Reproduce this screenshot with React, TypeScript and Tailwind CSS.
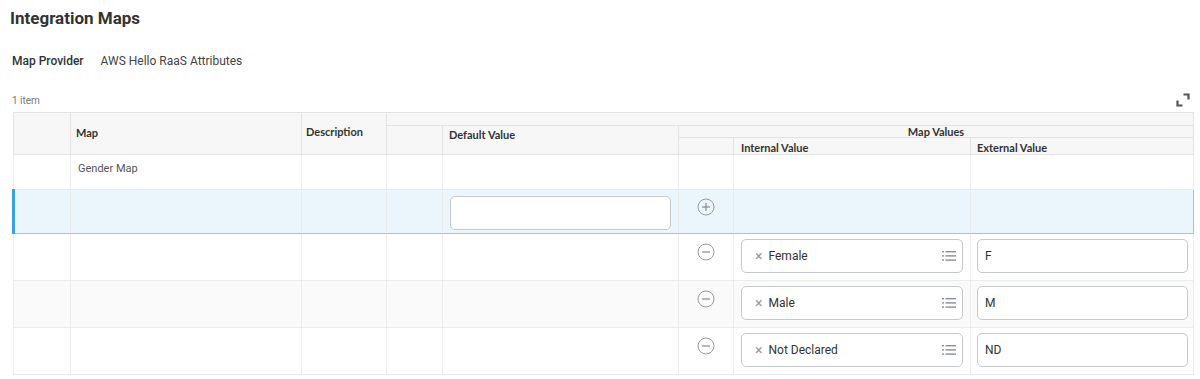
import React from "react";

const font = { fontFamily: "Roboto, 'Liberation Sans', sans-serif" };
const headFont = { fontFamily: "Lato, Roboto, 'Liberation Sans', sans-serif" };

function CircleIcon({ plus }: { plus?: boolean }) {
  return (
    <svg width="18" height="18" viewBox="0 0 18 18" className="block">
      <circle cx="9" cy="9" r="8" fill="none" stroke="#9a9a9a" strokeWidth="1" />
      <line x1="5" y1="9" x2="13" y2="9" stroke="#8a8a8a" strokeWidth="1.2" />
      {plus && <line x1="9" y1="5" x2="9" y2="13" stroke="#8a8a8a" strokeWidth="1.2" />}
    </svg>
  );
}

function ListIcon() {
  return (
    <svg width="14" height="10" viewBox="0 0 14 10" className="block">
      <rect x="0" y="0" width="2" height="1.4" fill="#8a8f96" />
      <rect x="3.5" y="0" width="10.5" height="1.4" fill="#8a8f96" />
      <rect x="0" y="4.2" width="2" height="1.4" fill="#8a8f96" />
      <rect x="3.5" y="4.2" width="10.5" height="1.4" fill="#8a8f96" />
      <rect x="0" y="8.4" width="2" height="1.4" fill="#8a8f96" />
      <rect x="3.5" y="8.4" width="10.5" height="1.4" fill="#8a8f96" />
    </svg>
  );
}

function ExpandIcon() {
  return (
    <svg width="14" height="14" viewBox="0 0 14 14" className="block">
      <path d="M7.5 1.5 H12.5 V6.5" fill="none" stroke="#555" strokeWidth="2.2" />
      <path d="M1.5 7.5 V12.5 H6.5" fill="none" stroke="#555" strokeWidth="2.2" />
    </svg>
  );
}

function MultiSelect({ label }: { label: string }) {
  return (
    <div className="flex h-[34px] items-center rounded-[5px] border border-[#c6c9cc] bg-white pl-[13px] pr-[6px]">
      <span className="text-[14px] leading-none text-[#999]">×</span>
      <span className="ml-[6px] flex-1 text-[12px] text-[#333]">{label}</span>
      <ListIcon />
    </div>
  );
}

function TextInput({ value }: { value?: string }) {
  return (
    <div className="flex h-[34px] items-center rounded-[5px] border border-[#c6c9cc] bg-white px-[7px] text-[12px] text-[#333]">
      {value}
    </div>
  );
}

const th = "border border-[#e3e3e3] bg-[#f7f7f7] p-0 align-top text-[11px] font-bold text-[#333]";
const td = "border border-[#ececec] p-0 align-top";

function DataRow({ label, ext, shaded }: { label: string; ext: string; shaded?: boolean }) {
  const bg = shaded ? "bg-[#fafafa]" : "bg-white";
  return (
    <tr className={`h-[47px] ${bg}`}>
      <td className={td}></td>
      <td className={td}></td>
      <td className={td}></td>
      <td className={td}></td>
      <td className={td}></td>
      <td className={`${td}`}>
        <div className="flex justify-center pt-[9px]">
          <CircleIcon />
        </div>
      </td>
      <td className={`${td} px-[7px] pt-[5px]`}>
        <MultiSelect label={label} />
      </td>
      <td className={`${td} pl-[6px] pr-[5px] pt-[5px]`}>
        <TextInput value={ext} />
      </td>
    </tr>
  );
}

export default function App() {
  return (
    <div className="w-[1200px] h-[379px] overflow-hidden bg-white" style={font}>
      <div className="pl-[10px] pt-[8px]">
        <h1 className="text-[17px] font-bold leading-[20px] text-[#333]">Integration Maps</h1>
      </div>
      <div className="mt-[25px] flex items-center pl-[12px] text-[12px] leading-[16px]">
        <span className="font-medium text-[#333]">Map Provider</span>
        <span className="ml-[17px] text-[#444]">AWS Hello RaaS Attributes</span>
      </div>
      <div className="mt-[24px] flex items-end justify-between pl-[12px] pr-[10px]">
        <span className="text-[10px] leading-[13px] text-[#777]">1 item</span>
        <ExpandIcon />
      </div>
      <div className="ml-[12px] mt-[5px] w-[1180px]">
        <table className="w-[1180px] table-fixed border-collapse border border-[#dcdcdc]" style={headFont}>
          <colgroup>
            <col className="w-[57px]" />
            <col className="w-[231px]" />
            <col className="w-[85px]" />
            <col className="w-[56px]" />
            <col className="w-[236px]" />
            <col className="w-[55px]" />
            <col className="w-[237px]" />
            <col className="w-[223px]" />
          </colgroup>
          <thead>
            <tr className="h-[13px]">
              <th rowSpan={3} className={th}></th>
              <th rowSpan={3} className={`${th} text-left pl-[5px] pt-[12px]`}>Map</th>
              <th rowSpan={3} className={`${th} text-left pl-[4px] pt-[11px]`}>Description</th>
              <th colSpan={5} className={th}></th>
            </tr>
            <tr className="h-[12px]">
              <th rowSpan={2} className={th}></th>
              <th rowSpan={2} className={`${th} text-left pl-[6px] pt-[1px]`}>Default Value</th>
              <th colSpan={3} className={`${th} text-center leading-[11px]`}>Map Values</th>
            </tr>
            <tr className="h-[17px]">
              <th className={th}></th>
              <th className={`${th} text-left pl-[7px] pt-[4px] leading-[12px]`}>Internal Value</th>
              <th className={`${th} text-left pl-[6px] pt-[4px] leading-[12px]`}>External Value</th>
            </tr>
          </thead>
          <tbody style={font}>
            <tr className="h-[35px] bg-white">
              <td className={td}></td>
              <td className={`${td} pl-[7px] pt-[6px] text-[11px] text-[#555]`}>Gender Map</td>
              <td className={td}></td>
              <td className={td}></td>
              <td className={td}></td>
              <td className={td}></td>
              <td className={td}></td>
              <td className={td}></td>
            </tr>
            <tr className="h-[44px] bg-[#eaf6fc]">
              <td className={`${td} border-l-[3px] border-l-[#3aa1e4] border-y-[#8fcbee]`}></td>
              <td className={`${td} border-y-[#8fcbee]`}></td>
              <td className={`${td} border-y-[#8fcbee]`}></td>
              <td className={`${td} border-y-[#8fcbee]`}></td>
              <td className={`${td} border-y-[#8fcbee] px-[7px] pt-[6px]`}>
                <TextInput />
              </td>
              <td className={`${td} border-y-[#8fcbee]`}>
                <div className="flex justify-center pt-[8px]">
                  <CircleIcon plus />
                </div>
              </td>
              <td className={`${td} border-y-[#8fcbee]`}></td>
              <td className={`${td} border-y-[#8fcbee] border-r-[#8fcbee]`}></td>
            </tr>
            <DataRow label="Female" ext="F" />
            <DataRow label="Male" ext="M" shaded />
            <DataRow label="Not Declared" ext="ND" />
          </tbody>
        </table>
      </div>
    </div>
  );
}
